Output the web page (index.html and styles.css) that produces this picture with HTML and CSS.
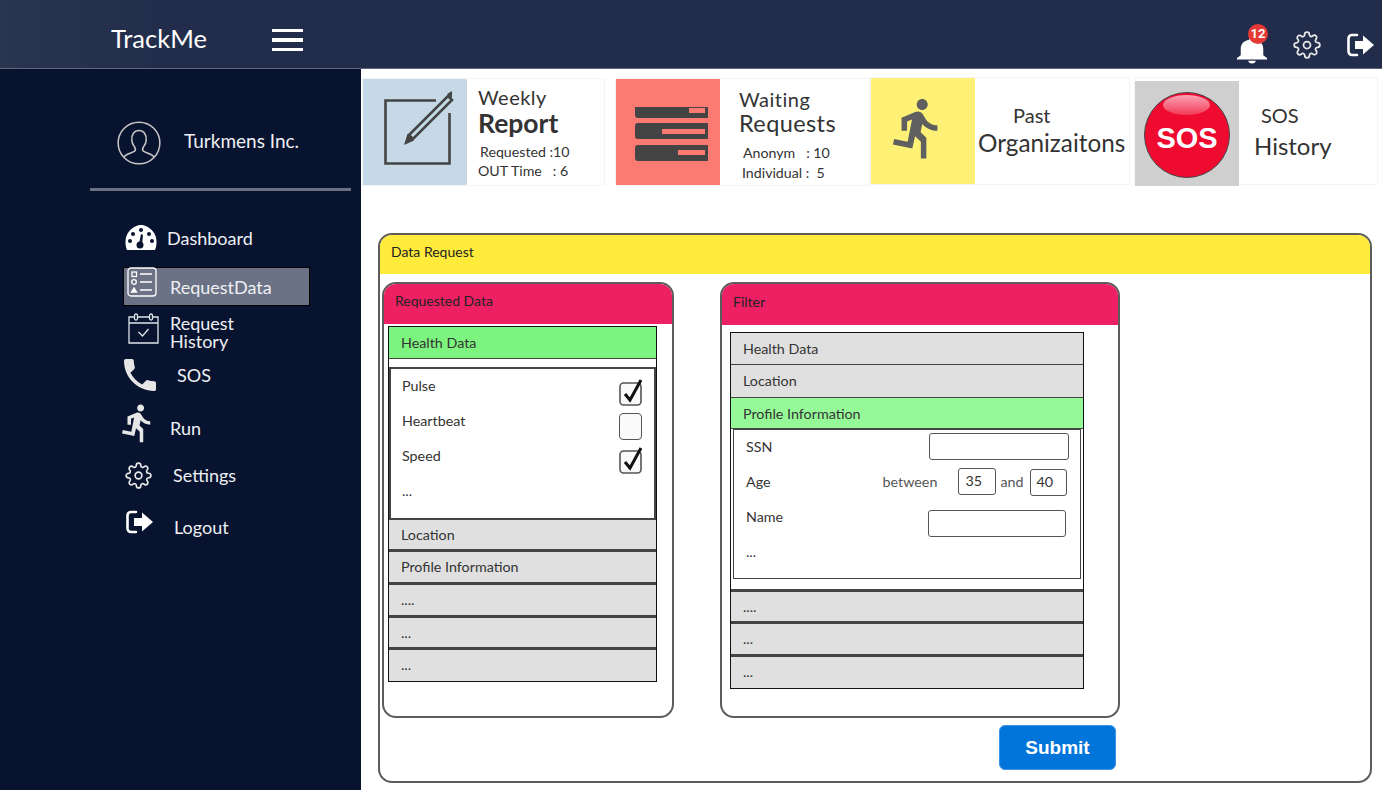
FILE: index.html
```html
<!DOCTYPE html>
<html lang="en">
<head>
    <meta charset="UTF-8">
    <meta name="viewport" content="width=device-width, initial-scale=1.0">
    <title>TrackMe</title>
    <link rel="stylesheet" href="styles.css">
</head>
<body>
    <svg class="icon-defs" width="0" height="0" aria-hidden="true">
        <symbol id="i-gear" viewBox="0 0 24 24">
            <circle cx="12" cy="12" r="3" fill="none" stroke="currentColor" stroke-width="1.5"/>
            <path fill="none" stroke="currentColor" stroke-width="1.5" d="M19.4 15a1.65 1.65 0 0 0 .33 1.82l.06.06a2 2 0 0 1 0 2.83 2 2 0 0 1-2.83 0l-.06-.06a1.65 1.65 0 0 0-1.82-.33 1.65 1.65 0 0 0-1 1.51V21a2 2 0 0 1-2 2 2 2 0 0 1-2-2v-.09A1.65 1.65 0 0 0 9 19.4a1.65 1.65 0 0 0-1.82.33l-.06.06a2 2 0 0 1-2.83 0 2 2 0 0 1 0-2.83l.06-.06a1.65 1.65 0 0 0 .33-1.82 1.65 1.65 0 0 0-1.51-1H3a2 2 0 0 1-2-2 2 2 0 0 1 2-2h.09A1.65 1.65 0 0 0 4.6 9a1.65 1.65 0 0 0-.33-1.82l-.06-.06a2 2 0 0 1 0-2.83 2 2 0 0 1 2.83 0l.06.06a1.65 1.65 0 0 0 1.82.33H9a1.65 1.65 0 0 0 1-1.51V3a2 2 0 0 1 2-2 2 2 0 0 1 2 2v.09a1.65 1.65 0 0 0 1 1.51 1.65 1.65 0 0 0 1.82-.33l.06-.06a2 2 0 0 1 2.83 0 2 2 0 0 1 0 2.83l-.06.06a1.65 1.65 0 0 0-.33 1.82V9a1.65 1.65 0 0 0 1.51 1H21a2 2 0 0 1 2 2 2 2 0 0 1-2 2h-.09a1.65 1.65 0 0 0-1.51 1z"/>
        </symbol>
        <symbol id="i-logout" viewBox="0 0 27 24">
            <path fill="none" stroke="currentColor" stroke-width="2.6" stroke-linecap="round" d="M10 2H5a3.5 3.5 0 0 0-3.5 3.5v13A3.5 3.5 0 0 0 5 22h5"/>
            <path fill="currentColor" d="M8 8h8V2.5L27 12 16 21.500V16H8z"/>
        </symbol>
        <symbol id="i-run" viewBox="0 0 24 24">
            <path fill="currentColor" d="M13.49 5.48c1.1 0 2-.9 2-2s-.9-2-2-2-2 .9-2 2 .9 2 2 2zm-3.6 13.9l1-4.4 2.1 2v6h2v-7.500l-2.100-2 .6-3c1.300 1.500 3.300 2.500 5.500 2.500v-2c-1.900 0-3.500-1-4.300-2.400l-1-1.600c-.4-.6-1-1-1.700-1-.3 0-.5.1-.8.1l-5.200 2.200v4.700h2v-3.400l1.800-.7-1.600 8.100-4.900-1-.4 2 7 1.400z"/>
        </symbol>
        <symbol id="i-check" viewBox="0 0 24 28">
            <rect x="1" y="5" width="21" height="22" rx="3.500" fill="#fafafa" stroke="#555" stroke-width="1.600"/>
            <path fill="none" stroke="#111" stroke-width="3" d="M6 16l5 6L22 2"/>
        </symbol>
    </svg>

    <header class="topbar">
        <span class="brand">TrackMe</span>
        <div class="burger"><i></i><i></i><i></i></div>
        <div class="top-icons">
            <div class="bell">
                <svg class="bell-icon" viewBox="4 2 16 21" preserveAspectRatio="none"><path fill="#fff" d="M12 22c1.100 0 2-.9 2-2h-4c0 1.100.89 2 2 2zm6-6v-5c0-3.070-1.640-5.640-4.500-6.320V4c0-.83-.67-1.500-1.500-1.500s-1.500.67-1.500 1.500v.68C7.630 5.360 6 7.920 6 11v5l-2 2v1h16v-1l-2-2z"/></svg>
                <span class="badge">12</span>
            </div>
            <svg class="top-gear"><use href="#i-gear"/></svg>
            <svg class="top-logout"><use href="#i-logout"/></svg>
        </div>
    </header>

    <div class="app">
        <aside class="sidebar">
            <div class="profile">
                <svg class="avatar" viewBox="0 0 46 46">
                    <circle cx="23" cy="23" r="21.800" fill="none" stroke="#c9c5c5" stroke-width="1.600"/>
                    <path fill="none" stroke="#c9c5c5" stroke-width="1.600" d="M7 38c2-4 9-4.500 11.500-6.500 1-1 .8-3-.3-4.500-1.700-2-2.500-3.500-2.700-7-.5-6 2.500-10 7.500-10s8 4 7.500 10c-.2 3.500-1 5-2.700 7-1.100 1.500-1.300 3.500-.3 4.500 2.500 2 9.500 2.500 11.500 6.500"/>
                </svg>
                <span class="profile-name">Turkmens Inc.</span>
            </div>
            <hr class="side-line">
            <nav class="nav">
                <a class="nav-item nav-dash">
                    <svg class="nav-icon" width="32" height="26" viewBox="0 0 32 26">
                        <path fill="#fff" d="M2 25C-.5 19 0 11 4 6.500 8 1.500 13 0 16 0s8 1.500 12 6.500C32 11 32.500 19 30 25z"/>
                        <g fill="#07132f"><circle cx="16" cy="5" r="2"/><circle cx="8" cy="9" r="2"/><circle cx="24" cy="9" r="2"/><circle cx="5" cy="16" r="2"/><circle cx="27" cy="16" r="2"/><circle cx="15" cy="20" r="3.500"/><path d="M14 19l2-10 2 1-1 10z"/></g>
                    </svg>
                    <span>Dashboard</span>
                </a>
                <a class="nav-item nav-request active">
                    <svg class="nav-icon" width="30" height="30" viewBox="0 0 30 30" fill="none" stroke="#fff" stroke-width="1.300">
                        <rect x="1" y="1" width="28" height="28" rx="3"/>
                        <rect x="5" y="5" width="4.500" height="4.500"/><path d="M13 7h12M13 15h12M13 23h12"/>
                        <circle cx="7" cy="15" r="2.300"/><path fill="#fff" d="M4.500 25l2.500-4 2.500 4z"/>
                    </svg>
                    <span>RequestData</span>
                </a>
                <a class="nav-item nav-history">
                    <svg class="nav-icon" width="31" height="31" viewBox="0 0 31 31" fill="none" stroke="#dfe3ea" stroke-width="1.300">
                        <path d="M1 4h29v26H1zM1 10h29"/>
                        <rect x="6.500" y="1" width="3" height="6" rx="1.500" fill="#07132f"/><rect x="21.500" y="1" width="3" height="6" rx="1.500" fill="#07132f"/>
                        <path d="M10.500 19l4 4 6-7"/>
                    </svg>
                    <span>Request<br>History</span>
                </a>
                <a class="nav-item nav-sos">
                    <svg class="nav-icon" width="32" height="32" viewBox="3 3 18 18"><path fill="#e6e6e6" d="M20 15.500c-1.250 0-2.450-.2-3.570-.57-.35-.11-.74-.03-1.020.24l-2.200 2.200c-2.830-1.440-5.150-3.750-6.590-6.590l2.200-2.210c.28-.26.36-.65.25-1C8.700 6.450 8.500 5.250 8.500 4c0-.55-.45-1-1-1H4c-.55 0-1 .45-1 1 0 9.390 7.610 17 17 17 .55 0 1-.45 1-1v-3.500c0-.55-.45-1-1-1z"/></svg>
                    <span>SOS</span>
                </a>
                <a class="nav-item nav-run">
                    <svg class="nav-icon run-icon"><use href="#i-run"/></svg>
                    <span>Run</span>
                </a>
                <a class="nav-item nav-settings">
                    <svg class="nav-icon gear-icon"><use href="#i-gear"/></svg>
                    <span>Settings</span>
                </a>
                <a class="nav-item nav-logout">
                    <svg class="nav-icon logout-icon"><use href="#i-logout"/></svg>
                    <span>Logout</span>
                </a>
            </nav>
        </aside>

        <main class="main">
            <section class="cards">
                <div class="card card-report">
                    <div class="card-thumb thumb-blue">
                        <svg width="104" height="106" viewBox="0 0 104 106">
                            <path fill="none" stroke="#444" stroke-width="2.600" d="M73 21.500H22.500V84.500H86.500V34"/>
                            <path fill="#c5dae6" stroke="#444" stroke-width="2.600" d="M46 56L85 17l4 4-39 39z"/>
                            <path fill="#444" d="M41 66l3.500-11 6.500 6.500zM84 15l5-3v7z"/>
                        </svg>
                    </div>
                    <div class="card-text">
                        <div class="t-small-head">Weekly</div>
                        <div class="t-big">Report</div>
                        <div class="t-line t-first">Requested :10</div>
                        <div class="t-line t-out">OUT Time   : 6</div>
                    </div>
                </div>
                <div class="card card-waiting">
                    <div class="card-thumb thumb-red">
                        <svg width="104" height="106" viewBox="0 0 104 106">
                            <path fill="#444" d="M19 28h73v11H22a3 3 0 0 1-3-3zM22 44h70v16H22a3 3 0 0 1-3-3V47a3 3 0 0 1 3-3zM22 66h70v16H22a3 3 0 0 1-3-3V69a3 3 0 0 1 3-3z"/>
                            <path fill="#fb7a71" d="M73 29h16v5H73zM46 50h43v5H46zM62 71h27v5H62z"/>
                        </svg>
                    </div>
                    <div class="card-text">
                        <div class="t-head">Waiting</div>
                        <div class="t-head t-head-2">Requests</div>
                        <div class="t-line t-anon">Anonym   : 10</div>
                        <div class="t-line t-ind">Individual :  5</div>
                    </div>
                </div>
                <div class="card card-past">
                    <div class="card-thumb thumb-yellow">
                        <svg width="104" height="106" viewBox="0 0 104 106">
                            <g transform="translate(14 17) scale(2.760)"><use href="#i-run" width="24" height="24" color="#5f5f5f"/></g>
                        </svg>
                    </div>
                    <div class="card-text">
                        <div class="t-center-small">Past</div>
                        <div class="t-org">Organizaitons</div>
                    </div>
                </div>
                <div class="card card-sos">
                    <div class="card-thumb thumb-grey">
                        <div class="sos-button"><span class="sos-gloss"></span>SOS</div>
                    </div>
                    <div class="card-text">
                        <div class="t-sos">SOS</div>
                        <div class="t-hist">History</div>
                    </div>
                </div>
            </section>

            <section class="data-panel">
                <div class="data-title">Data Request</div>
                <div class="data-body">
                    <div class="sub-panel panel-left">
                        <div class="sub-title">Requested Data</div>
                        <div class="acc acc-left">
                            <div class="acc-head open-green">Health Data</div>
                            <div class="check-box">
                                <div class="check-row"><span>Pulse</span><svg class="check"><use href="#i-check"/></svg></div>
                                <div class="check-row"><span>Heartbeat</span><span class="check-empty"></span></div>
                                <div class="check-row"><span>Speed</span><svg class="check"><use href="#i-check"/></svg></div>
                                <div class="check-row"><span>...</span></div>
                            </div>
                            <div class="acc-head">Location</div>
                            <div class="acc-head">Profile Information</div>
                            <div class="acc-head">....</div>
                            <div class="acc-head">...</div>
                            <div class="acc-head acc-last">...</div>
                        </div>
                    </div>
                    <div class="sub-panel panel-right">
                        <div class="sub-title sub-title-filter">Filter</div>
                        <div class="acc acc-right">
                            <div class="acc-head thin">Health Data</div>
                            <div class="acc-head thin">Location</div>
                            <div class="acc-head thin open-mint">Profile Information</div>
                            <div class="filter-wrap">
                                <div class="filter-box">
                                    <div class="f-row f-ssn"><span>SSN</span><span class="f-input f-input-ssn"></span></div>
                                    <div class="f-row f-age">
                                        <span>Age</span>
                                        <span class="f-between">between</span>
                                        <span class="f-input f-num">35</span>
                                        <span class="f-and">and</span>
                                        <span class="f-input f-num f-num-2">40</span>
                                    </div>
                                    <div class="f-row f-name"><span>Name</span><span class="f-input f-input-name"></span></div>
                                    <div class="f-row f-more"><span>...</span></div>
                                </div>
                            </div>
                            <div class="acc-head">....</div>
                            <div class="acc-head">...</div>
                            <div class="acc-head acc-last">...</div>
                        </div>
                    </div>
                    <button class="submit" type="button">Submit</button>
                </div>
            </section>
        </main>
    </div>
</body>
</html>
```

FILE: styles.css
```css
* { box-sizing: border-box; }
html, body { margin: 0; height: 100%; overflow: hidden; }
body { font-family: "Lato", "Noto Sans", sans-serif; color: #333; background: #fff; }
.icon-defs { position: absolute; }

/* top bar */
.topbar { height: 69px; display: flex; align-items: center; padding-left: 111px; background: linear-gradient(90deg, #2a3650 0, #212d4a 12%); border-bottom: 1px solid #5f6678; color: #fff; }
.brand { font-size: 25.500px; width: 161px; margin-top: 8px; }
.burger { width: 31px; display: flex; flex-direction: column; gap: 6px; margin-top: 12px; }
.burger i { display: block; height: 3.500px; background: #fff; }
.top-icons { margin-left: auto; display: flex; align-items: flex-start; padding-top: 24px; height: 68px; }
.bell { position: relative; width: 30px; height: 38px; margin-right: 26px; }
.bell-icon { position: absolute; left: 0; top: 12px; width: 30px; height: 29px; }
.badge { position: absolute; left: 11px; top: 0; width: 20px; height: 20px; border-radius: 50%; background: #e53935; color: #fff; font: bold 13px/20px "Roboto", sans-serif; text-align: center; }
.top-gear { width: 28px; height: 28px; margin: 7px 26px 0 0; color: #e8e8e8; }
.top-logout { width: 27px; height: 24px; margin: 9px 8px 0 0; color: #fff; }

.app { display: flex; height: 721px; }

/* sidebar */
.sidebar { width: 361px; flex: none; background: #07132f; padding-left: 90px; color: #fff; }
.profile { display: flex; align-items: center; padding: 48px 0 0 27px; }
.avatar { width: 44px; height: 44px; margin-top: 4px; }
.profile-name { font-size: 19px; margin: 0 0 1px 23px; color: #eef0f3; }
.side-line { height: 3px; width: 261px; border: 0; margin: 23px 0 0; background: #6b7081; }
.nav { display: flex; flex-direction: column; padding: 0 0 0 33px; font-size: 18px; }
.nav-item { display: flex; align-items: center; color: #eef0f3; }
.nav-dash { margin: 33px 0 0 2px; height: 27px; }
.nav-dash span { margin-left: 10px; }
.nav-request { margin-top: 16px; width: 187px; height: 39px; background: #6c7285; border: 1px solid #000; padding-left: 3px; }
.nav-request .nav-icon { margin-top: -9px; }
.nav-request span { margin: 0 0 0 13px; }
.nav-history { margin: 6px 0 0 5px; height: 39px; line-height: 18px; }
.nav-history .nav-icon { margin-top: -6px; }
.nav-history span { margin-left: 11px; }
.nav-sos { margin: 8px 0 0 1px; height: 32px; }
.nav-sos span { margin-left: 21px; }
.nav-run { margin: 12px 0 0 -6px; height: 39px; }
.run-icon { width: 42px; height: 42px; color: #e6e6e6; }
.nav-run span { margin: 10px 0 0 11px; }
.nav-settings { margin: 19px 0 0 2px; height: 28px; }
.gear-icon { width: 27px; height: 27px; color: #e6e6e6; }
.nav-settings span { margin-left: 21px; }
.nav-logout { margin: 20px 0 0 3px; height: 26px; }
.logout-icon { width: 27px; height: 24px; color: #fff; }
.nav-logout span { margin: 10px 0 0 21px; }

/* stat cards */
.main { flex: 1; padding-left: 1px; }
.cards { display: flex; align-items: flex-start; height: 164px; }
.card { display: flex; border: 1px solid #f4f4f4; background: #fff; }
.card-thumb { width: 104px; height: 106px; flex: none; }
.thumb-blue { background: #c5dae6; }
.thumb-red { background: #fb7a71; }
.thumb-yellow { background: #fff176; }
.thumb-grey { background: #cfcfcf; height: 105px; display: flex; align-items: center; justify-content: center; }
.card-report { width: 243px; margin-top: 9px; }
.card-waiting { width: 255px; margin: 9px 0 0 10px; }
.card-past { width: 260px; margin: 8px 0 0 0; }
.card-sos { width: 244px; margin: 8px 0 0 4px; height: 108px; padding-top: 3px; }
.card-text { flex: 1; color: #333; }
.card-report .card-text { padding: 6px 0 0 11px; }
.t-small-head { font-size: 20px; line-height: 24px; letter-spacing: .5px; }
.t-big { font-size: 26.500px; line-height: 28px; font-weight: 700; }
.t-line { font-size: 14.200px; line-height: 19px; white-space: pre; }
.t-first { margin: 5px 0 0 2px; }
.card-waiting .card-text { padding: 8px 0 0 19px; }
.t-head { font-size: 20px; line-height: 24px; letter-spacing: .5px; }
.t-head-2 { font-size: 23.500px; line-height: 24px; letter-spacing: .4px; }
.t-anon { margin: 8px 0 0 4px; }
.t-ind { margin: 1px 0 0 3px; }
.t-center-small { font-size: 20px; line-height: 26px; margin: 24px 0 0 38px; }
.t-org { font-size: 24.300px; line-height: 30px; margin: 0 0 0 3px; }
.t-sos { font-size: 20px; line-height: 26px; margin: 21px 0 0 22px; }
.t-hist { font-size: 24px; line-height: 32px; margin: 2px 0 0 15px; }
.sos-button { position: relative; width: 86px; height: 86px; margin-top: 2px; border-radius: 50%; background: #ef0a2f; border: 1px solid #444; color: #fff; font: bold 29px/90px "Liberation Sans", sans-serif; text-align: center; }
.sos-gloss { position: absolute; left: 18px; top: 2px; width: 47px; height: 20px; border-radius: 50%; background: linear-gradient(#f9a3b3, #f23a57); }

/* data request */
.data-panel { margin: 0 0 0 16px; width: 994px; height: 550px; border: 2px solid #5c5c5c; border-radius: 14px; overflow: hidden; }
.data-title { height: 39px; background: #ffeb3b; padding-left: 11px; font-size: 14px; line-height: 33px; color: #222; }
.data-body { display: grid; grid-template-columns: 292px 400px; column-gap: 46px; padding: 8px 0 0 2px; }
.sub-panel { height: 436px; border: 2px solid #5c5c5c; border-radius: 14px; overflow: hidden; }
.sub-title { height: 40px; background: #ec2063; padding-left: 11px; font-size: 14px; line-height: 34px; color: #222; }
.sub-title-filter { height: 41px; line-height: 36px; }
.acc { border: 1px solid #111; background: #fff; font-size: 14.300px; }
.acc-left { margin: 2px 0 0 4px; width: 269px; height: 356px; }
.acc-right { margin: 7px 0 0 8px; width: 354px; height: 357px; }
.acc-head { height: 32.700px; padding-left: 12px; background: #e0e0e0; line-height: 30px; border-bottom: 3px solid #444; color: #333; }
.acc-head.thin { border-bottom-width: 1.500px; height: 32.300px; line-height: 32px; }
.acc-last { border-bottom: 0; height: 31px; }
.acc-head.open-green { background: #7df47f; height: 31.500px; line-height: 32px; border-bottom: 1px solid #444; }
.acc-head.open-mint { background: #96f998; height: 31px; line-height: 31px; }
.check-box { position: relative; height: 161px; padding-top: 15px; background: #fff; }
.check-box::before { content: ""; position: absolute; left: 0; right: 0; top: 8px; bottom: 0; border: 2px solid #444; pointer-events: none; }
.check-row { display: flex; justify-content: space-between; height: 35px; padding: 2px 13px 0 13px; line-height: 17px; }
.check-row:first-child { height: 36px; padding-top: 3px; }
.check { width: 24px; height: 28px; margin-top: 1px; }
.check-row:nth-child(3) .check { margin-top: -1px; }
.check-empty { width: 23px; height: 27px; margin: 1px 1px 0 0; border: 1.600px solid #555; border-radius: 4px; background: #fafafa; }
.filter-wrap { height: 163px; padding: 0 2px 0 2px; border-bottom: 3px solid #444; background: #fff; }
.filter-box { height: 150px; border: 1.500px solid #444; }
.f-row { display: flex; align-items: center; padding-left: 12px; color: #333; }
.f-ssn { height: 34px; }
.f-age { height: 34px; margin-top: 1px; }
.f-name { height: 36px; }
.f-more { height: 34px; }
.f-input { display: block; background: #fff; border: 1.500px solid #555; border-radius: 3px; height: 27px; }
.f-input-ssn { width: 140px; margin-left: 157px; }
.f-between { margin-left: 112px; color: #555; }
.f-num { width: 38px; margin-left: 21px; padding-left: 6px; line-height: 23px; }
.f-and { margin-left: 4px; color: #555; }
.f-num-2 { width: 37px; margin-left: 6px; margin-top: 1px; }
.f-input-name { width: 138px; margin-left: 145px; margin-top: 13px; }
.submit { grid-column: 2; justify-self: end; width: 117px; height: 45px; margin: 7px 4px 0 0; background: #0275db; border: 1px solid #3a93e6; border-radius: 6px; color: #fff; font: bold 19px "Liberation Sans", sans-serif; }
```
